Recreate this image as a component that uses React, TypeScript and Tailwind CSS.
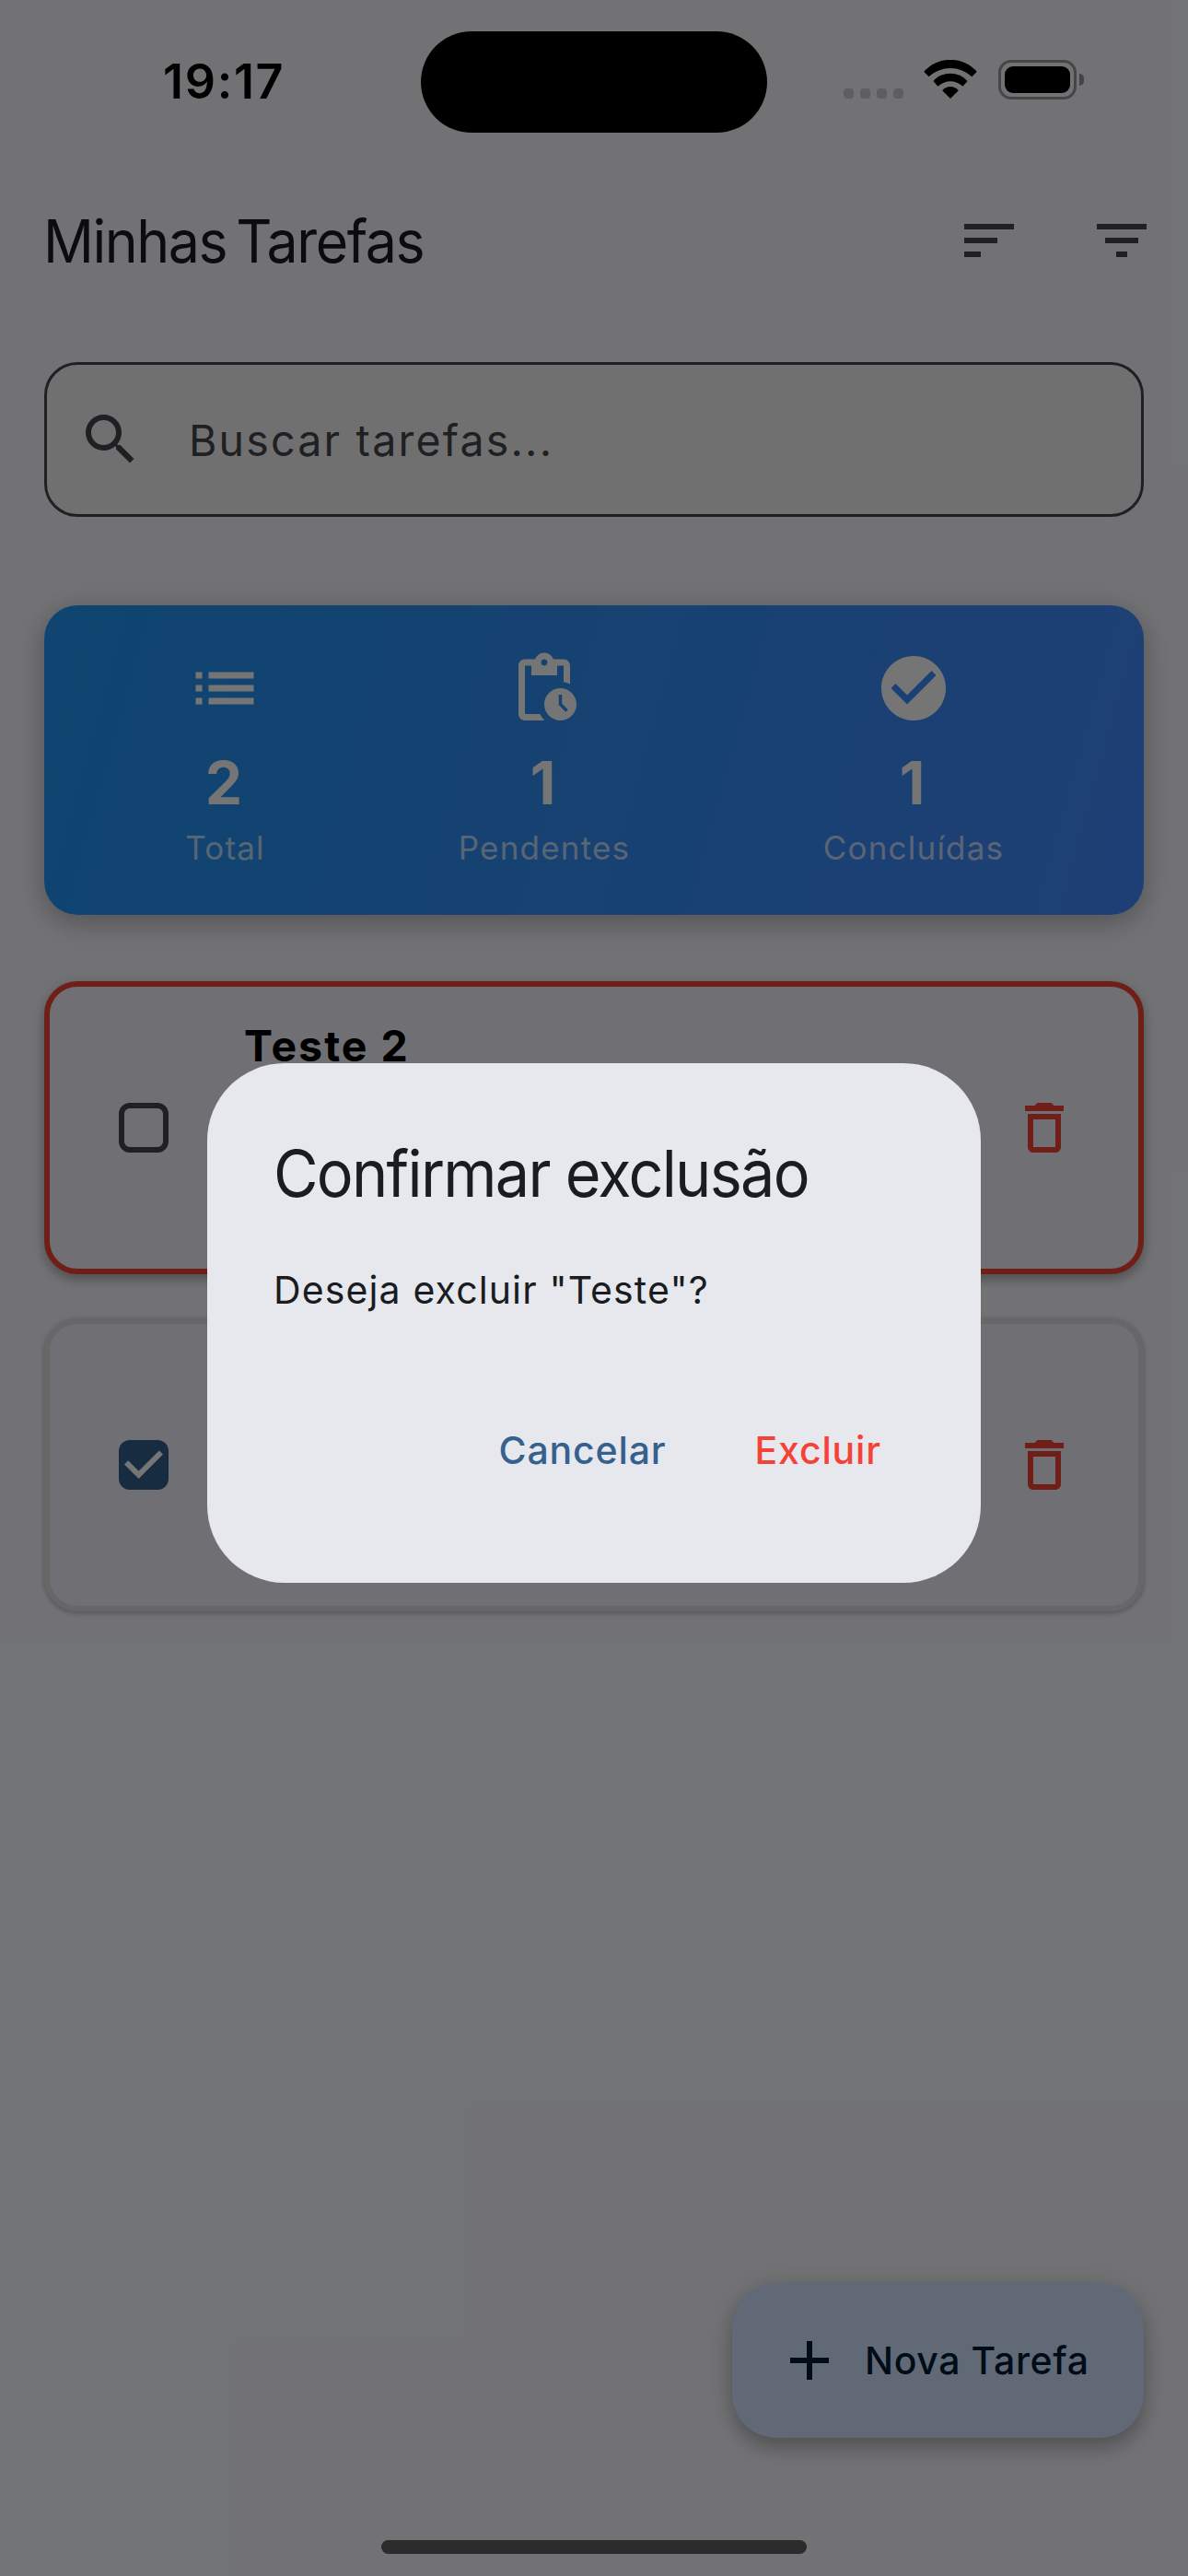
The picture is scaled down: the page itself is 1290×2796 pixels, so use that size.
import type { ReactNode } from "react";
import {
  MdAdd,
  MdCheckCircle,
  MdDeleteOutline,
  MdFilterList,
  MdList,
  MdPendingActions,
  MdSearch,
  MdSort,
} from "react-icons/md";

function WifiIcon() {
  return (
    <svg width="58" height="42" viewBox="0 0 57.6 42" fill="#000">
      <path d="M0 12.8A38.4 38.4 0 0 1 57.6 12.8L52.3 18.3A34.3 34.3 0 0 0 5.3 18.3Z" />
      <path d="M10.2 23A25 25 0 0 1 47.4 23L42.3 28.7A19.6 19.6 0 0 0 15.3 28.7Z" />
      <path d="M20 33.3A11.2 11.2 0 0 1 37.6 33.3L28.8 42Z" />
    </svg>
  );
}

function StatusBar() {
  return (
    <div className="relative z-20 flex h-[177px] items-start">
      <div className="w-[457px] pt-[57px] pl-[177px] text-[52px] leading-[64px] font-semibold tracking-[1.7px] text-black">
        19:17
      </div>
      <div className="mt-[34px] h-[110px] w-[376px] rounded-full bg-black" />
      <div className="mt-[65px] ml-[83px] flex h-[43px] items-start">
        <div className="mt-[31px] flex gap-[7px]">
          {[0, 1, 2, 3].map((dot) => (
            <span key={dot} className="size-[11px] rounded-[4px] bg-[#5e5e60]" />
          ))}
        </div>
        <div className="ml-[22px]">
          <WifiIcon />
        </div>
        <div className="ml-[23px] h-[43px] w-[85px] rounded-[14px] border-3 border-[#464648] p-[4px]">
          <div className="h-[29px] w-[71px] rounded-[9px] bg-black" />
        </div>
        <div className="mt-[15px] ml-[3px] h-[13px] w-[5px] rounded-r-full bg-[#434345]" />
      </div>
    </div>
  );
}

function Stat({ icon, value, label, width }: { icon: ReactNode; value: string; label: string; width: string }) {
  return (
    <div className={`flex flex-col items-center text-[84px] text-white ${width}`}>
      {icon}
      <span className="mt-6 h-[74px] pr-0.5 text-[64px] leading-[74px] font-bold">{value}</span>
      <span className="mt-2 h-[50px] pl-px text-[35px] leading-[50px] tracking-[1.2px] whitespace-nowrap text-white/70">
        {label}
      </span>
    </div>
  );
}

function Checkbox({ checked }: { checked?: boolean }) {
  if (!checked) return <div className="size-[54px] rounded-[12px] border-6 border-[#43474e]" />;
  return (
    <div className="size-[54px] rounded-[12px] bg-[#36618e]">
      <svg width="54" height="54" viewBox="0 0 54 54" fill="none" stroke="#fff" strokeWidth="6">
        <path d="M8.1 24.3L21.6 37.8L45.9 13.5" />
      </svg>
    </div>
  );
}

function TaskCard({ title, checked, frame }: { title?: string; checked?: boolean; frame: string }) {
  return (
    <div className={`flex h-[318px] items-center rounded-[36px] border-6 bg-[#f3f1fb] pr-[66px] pl-[75px] ${frame}`}>
      <Checkbox checked={checked} />
      <div className="ml-[82px] flex-1 self-stretch pt-[34px] text-[46.5px] leading-[60px] font-bold tracking-[2px] text-black">
        {title}
      </div>
      <MdDeleteOutline className="size-[72px] text-[#f44336]" />
    </div>
  );
}

function ConfirmDialog() {
  return (
    <div className="absolute inset-0 z-10 grid place-items-center bg-black/54 pt-[75px]">
      <div className="h-[564px] w-[840px] rounded-[84px] bg-[#e7e8ee] p-[72px] text-[#191c20]">
        <h2 className="h-24 origin-left scale-x-95 text-[70px] leading-[95px] tracking-[-1.8px] whitespace-nowrap">
          Confirmar exclusão
        </h2>
        <p className="mt-12 h-[60px] text-[41px] leading-[60px] tracking-[1.13px] whitespace-nowrap">
          Deseja excluir "Teste"?
        </p>
        <div className="mt-[72px] flex h-36 items-center justify-end gap-6 pt-0.5 text-[41px] font-medium tracking-[0.85px]">
          <button className="px-9 text-[#36618e]">Cancelar</button>
          <button className="px-9 text-[#f44336]">Excluir</button>
        </div>
      </div>
    </div>
  );
}

export default function App() {
  return (
    <div className="relative flex h-[2796px] w-[1290px] flex-col overflow-hidden bg-[#f8f9ff] font-[Inter,sans-serif]">
      <StatusBar />

      <header className="flex h-[168px] items-center justify-between pr-9 pl-[47px]">
        <h1 className="origin-left scale-x-95 pt-px text-[64px] tracking-[-1.5px] whitespace-nowrap text-[#191c20] [word-spacing:-6px]">
          Minhas Tarefas
        </h1>
        <div className="flex gap-[72px] text-[72px] text-[#43474e]">
          <MdSort />
          <MdFilterList />
        </div>
      </header>

      <main className="flex flex-1 flex-col px-12 pt-12">
        <div className="flex h-[168px] shrink-0 items-center gap-[49px] rounded-[36px] border-3 border-[#43474e] bg-[#f5f5f5] pl-[33px] text-[#43474e]">
          <MdSearch className="size-[72px]" />
          <span className="pt-1 text-[46.5px] tracking-[2.2px]">Buscar tarefas...</span>
        </div>

        <section className="mt-24 flex h-[336px] shrink-0 justify-around rounded-[36px] bg-[linear-gradient(105.7deg,#2196f3,#448aff)] p-12 shadow-[0_12px_30px_rgba(0,0,0,0.16),0_2px_30px_rgba(0,0,0,0.14)]">
          <Stat icon={<MdList />} value="2" label="Total" width="w-[86px]" />
          <Stat icon={<MdPendingActions />} value="1" label="Pendentes" width="w-[187px]" />
          <Stat icon={<MdCheckCircle />} value="1" label="Concluídas" width="w-[195px]" />
        </section>

        <section className="mt-[72px] flex flex-col gap-12">
          <TaskCard
            title="Teste 2"
            frame="border-[#f44336] shadow-[0_7px_12px_rgba(0,0,0,0.22),0_1px_16px_rgba(0,0,0,0.12)]"
          />
          <TaskCard
            checked
            frame="border-[#e0e0e0] shadow-[0_3px_5px_rgba(0,0,0,0.16),0_0_6px_rgba(0,0,0,0.14)]"
          />
        </section>

        <button className="mt-auto flex h-[168px] w-[447px] shrink-0 items-center gap-6 self-end rounded-[48px] bg-[#d1e4ff] pl-12 text-[#001d36] shadow-[0_12px_20px_rgba(0,0,0,0.2),0_3px_30px_rgba(0,0,0,0.14)]">
          <MdAdd className="size-[72px]" />
          <span className="pt-0.5 text-[41px] font-medium tracking-[0.62px] whitespace-nowrap">Nova Tarefa</span>
        </button>
      </main>

      <div className="relative z-20 mt-[111px] mb-6 h-[15px] w-[462px] shrink-0 self-center rounded-full bg-[#2c2c2c]" />

      <ConfirmDialog />
    </div>
  );
}
